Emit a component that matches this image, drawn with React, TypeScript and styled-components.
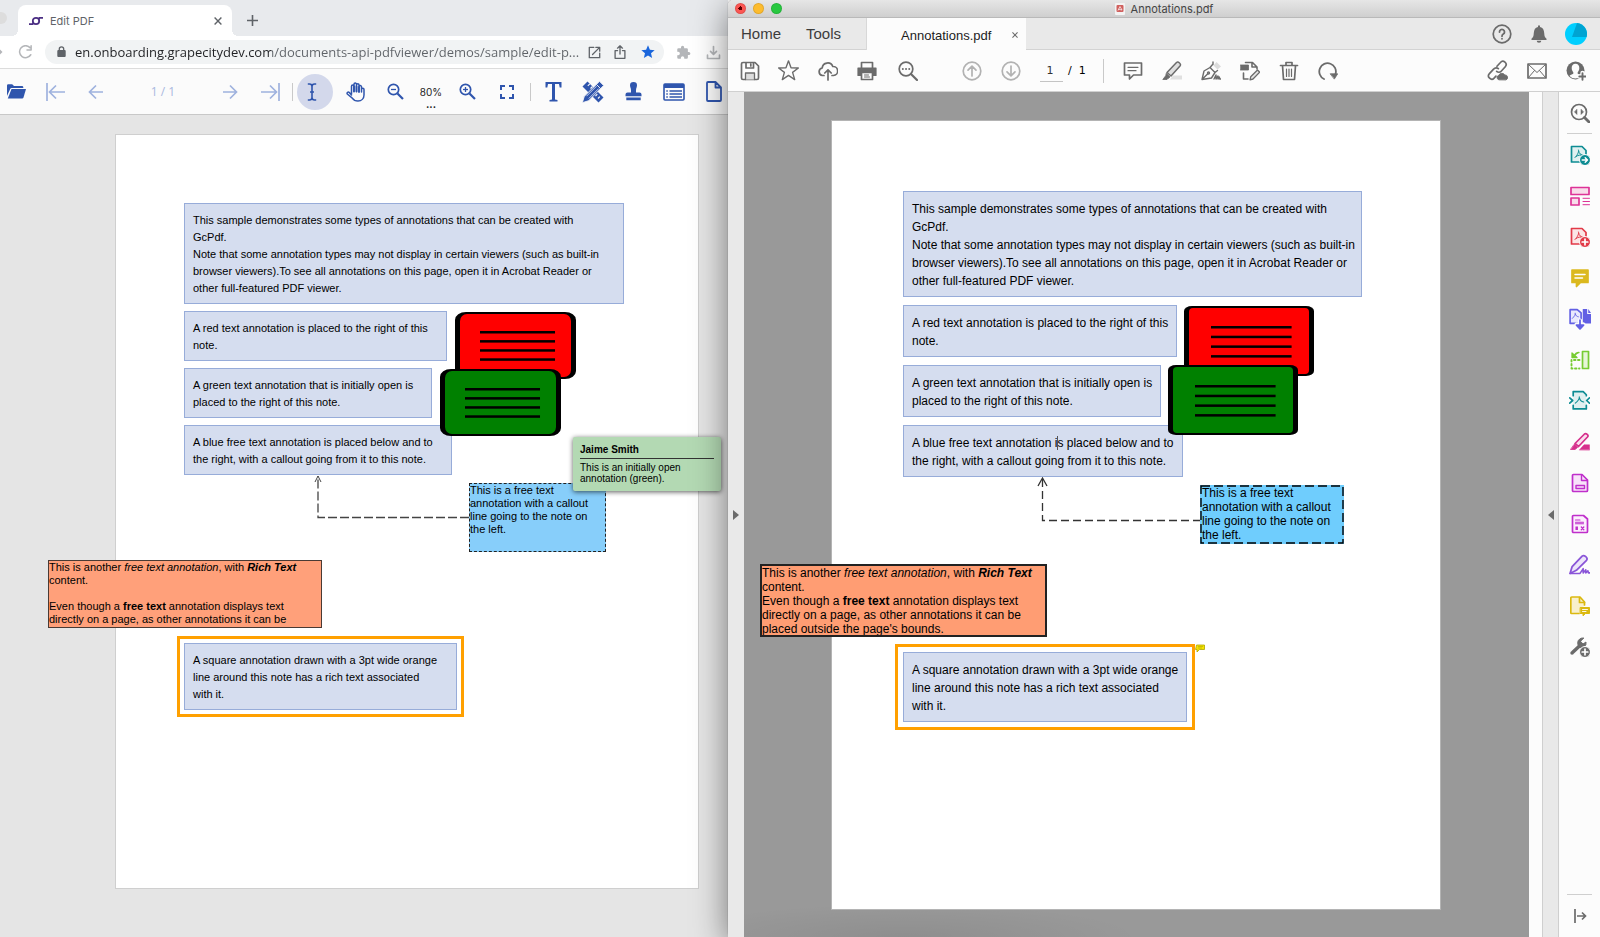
import React from "react";
import styled, { createGlobalStyle, css } from "styled-components";

const GlobalStyle = createGlobalStyle`
  *, *::before, *::after { box-sizing: border-box; }
  body { margin: 0; font-family: "Liberation Sans", Arial, sans-serif; color: #000; }
  button { font: inherit; }
  h2, p { margin: 0; }
  svg { display: block; flex: none; }
`;

const Desktop = styled.main`
  display: grid;
  grid-template-columns: 91fr 109fr;
  min-height: 100vh;
  overflow: hidden;
`;

/* ---------- shared parts ---------- */

const IconButton = styled.button<{ $w?: number; $color?: string }>`
  display: flex;
  align-items: center;
  justify-content: center;
  flex: none;
  width: ${(p) => p.$w ?? 39}px;
  height: 36px;
  padding: 0;
  border: 0;
  background: none;
  color: ${(p) => p.$color ?? "#6b6b6b"};
`;

const Spacer = styled.div<{ $w?: number }>`
  flex: ${(p) => (p.$w ? `none` : 1)};
  width: ${(p) => (p.$w ? `${p.$w}px` : "auto")};
`;

const Rule = styled.span<{ $h: number }>`
  flex: none;
  width: 1px;
  height: ${(p) => p.$h}px;
  background: #c9c9c9;
`;

/* ---------- browser window ---------- */

const BrowserWindow = styled.section`
  display: flex;
  flex-direction: column;
  min-width: 0;
  background: #e5e5e5;
`;

const TabStrip = styled.header`
  display: flex;
  align-items: flex-end;
  height: 36px;
  background: #e8eaed;

  > button {
    height: 31px;
  }
`;

const WindowDot = styled.span`
  align-self: center;
  width: 7px;
  height: 12px;
  margin-right: 11px;
  border-radius: 0 6px 6px 0;
  background: #dddddd;
`;

const BrowserTab = styled.div`
  position: relative;
  display: flex;
  align-items: center;
  width: 214px;
  height: 31px;
  padding: 0 6px 0 11px;
  border-radius: 8px 8px 0 0;
  background: #fff;
  font: 11px Inter, sans-serif;
  color: #5f6368;

  &::before,
  &::after {
    content: "";
    position: absolute;
    bottom: 0;
    width: 6px;
    height: 6px;
  }
  &::before {
    right: 100%;
    background: radial-gradient(circle at 0 0, transparent 6px, #fff 6px);
  }
  &::after {
    left: 100%;
    background: radial-gradient(circle at 100% 0, transparent 6px, #fff 6px);
  }
`;

const TabTitle = styled.span`
  flex: 1;
  margin-left: 7px;
`;

const AddressBar = styled.form`
  display: flex;
  align-items: center;
  height: 33px;
  background: #fff;
  border-bottom: 1px solid #dcdcdc;
`;

const UrlPill = styled.div`
  display: flex;
  align-items: center;
  flex: 1;
  min-width: 0;
  height: 24px;
  padding: 0 2px 0 12px;
  border-radius: 12px;
  background: #f1f3f4;
`;

const UrlInput = styled.input`
  flex: 1;
  min-width: 0;
  margin-left: 9px;
  padding: 0;
  border: 0;
  outline: 0;
  font: 13px/20px "Open Sans", sans-serif;
  color: #5f6368;
  background: linear-gradient(90deg, #202124 196px, #5f6368 196px);
  background-clip: text;
  -webkit-background-clip: text;
  -webkit-text-fill-color: transparent;
`;

const ViewerToolbar = styled.nav`
  display: flex;
  align-items: center;
  height: 46px;
  background: #fbfbfb;
  border-bottom: 1px solid #c8c8c8;
  color: #2f55ad;
`;

const SelectedTool = styled(IconButton)`
  padding-right: 6px;
  border-radius: 50%;
  background: #d3d8eb;
`;

const PageCount = styled.span`
  flex: none;
  width: 100px;
  text-align: center;
  font: 12px "Open Sans", sans-serif;
  color: #a9b9e0;
`;

const ZoomLevel = styled.button`
  flex: none;
  width: 34px;
  height: 36px;
  padding: 9px 0 0;
  border: 0;
  background: none;
  text-align: center;
  font: 10px/16px Inter, sans-serif;
  color: #222;

  span {
    display: block;
    font-weight: 700;
    line-height: 8px;
  }
`;

const BrowserCanvas = styled.div`
  flex: 1;
  padding: 19px 29px 48px 115px;
`;

/* ---------- pdf page ---------- */

const Page = styled.article<{ $w: number; $h: number; $pad: string; $size: number; $line: number; $edge: string }>`
  position: relative;
  width: ${(p) => p.$w}px;
  min-height: ${(p) => p.$h}px;
  padding: ${(p) => p.$pad};
  border: 1px solid ${(p) => p.$edge};
  background: #fff;
  font-size: ${(p) => p.$size}px;
  line-height: ${(p) => p.$line}px;
`;

const Notes = styled.div<{ $gap: number }>`
  display: flex;
  flex-direction: column;
  align-items: flex-start;
  gap: ${(p) => p.$gap}px;
`;

const Note = styled.p<{ $w: number }>`
  width: ${(p) => p.$w}px;
  padding: 8px 8px 6px;
  border: 1px solid #97acd9;
  background: #d5ddef;
  white-space: nowrap;
`;

const at = css<{ $x: number; $y: number }>`
  position: absolute;
  left: ${(p) => p.$x}px;
  top: ${(p) => p.$y}px;
`;

const Drawing = styled.svg<{ $x: number; $y: number }>`
  ${at}
`;

const FreeText = styled.div<{ $x: number; $y: number; $w: number; $h: number; $line: number; $fill: string; $border?: string }>`
  ${at}
  width: ${(p) => p.$w}px;
  height: ${(p) => p.$h}px;
  padding: ${(p) => (p.$border ? "0" : "1px 2px")};
  border: ${(p) => p.$border ?? "0"};
  overflow: hidden;
  background: ${(p) => p.$fill};
  line-height: ${(p) => p.$line}px;
  white-space: nowrap;
`;

const SquareMark = styled.div<{ $x: number; $y: number; $pad: number }>`
  ${at}
  padding: ${(p) => p.$pad}px;
  border: 3px solid #ffa000;
`;

const Popup = styled.aside<{ $x: number; $y: number }>`
  ${at}
  width: 148px;
  height: 54px;
  padding: 7px 7px 0;
  border-radius: 2px;
  background: #b3d9b3;
  box-shadow: 0 1px 5px rgba(0, 0, 0, 0.65);
  font-size: 10px;
  line-height: 11px;

  h2 {
    padding-bottom: 2px;
    margin-bottom: 3px;
    border-bottom: 1px solid #333;
    font-size: 10px;
    line-height: 12px;
  }
`;

const Caret = styled.span`
  position: absolute;
  width: 1px;
  height: 14px;
  margin-top: 2px;
  background: #555;
`;

/* ---------- acrobat window ---------- */

const AcrobatWindow = styled.section`
  position: relative;
  z-index: 1;
  display: flex;
  flex-direction: column;
  min-width: 0;
  border-radius: 5px 0 0 5px;
  background: #fcfcfc;
  box-shadow: 0 8px 34px rgba(0, 0, 0, 0.5), 0 0 1px rgba(0, 0, 0, 0.6);
`;

const TitleBar = styled.header`
  display: grid;
  grid-template-columns: 1fr auto 1fr;
  align-items: center;
  height: 18px;
  padding: 0 7px;
  border-bottom: 1px solid #b9b9b9;
  border-radius: 5px 0 0 0;
  background: linear-gradient(#e6e6e6, #cfcfcf);
`;

const Lights = styled.div`
  display: flex;
  gap: 7px;
`;

const Light = styled.button<{ $c: string; $dot?: boolean }>`
  width: 11px;
  height: 11px;
  padding: 0;
  border: 1px solid rgba(0, 0, 0, 0.1);
  border-radius: 50%;
  background: ${(p) => (p.$dot ? `radial-gradient(circle, #5a0000 2px, ${p.$c} 2px)` : p.$c)};
`;

const WindowTitle = styled.h1`
  display: flex;
  align-items: center;
  gap: 6px;
  margin: 0;
  font: 11px Inter, sans-serif;
  color: #444;
`;

const AcroTabs = styled.nav`
  display: flex;
  align-items: stretch;
  height: 32px;
  background: #e9e9e9;
  box-shadow: inset 0 -1px #d3d3d3;

  > button {
    height: 31px;
  }
`;

const MenuTab = styled.button`
  padding: 0 0 1px;
  margin-left: 13px;
  margin-right: 12px;
  border: 0;
  background: none;
  font-size: 15px;
  color: #3c3c3c;
`;

const DocTab = styled.div`
  display: flex;
  align-items: center;
  width: 160px;
  margin-left: 13px;
  padding: 2px 5px 0 34px;
  background: #fcfcfc;
  border-left: 1px solid #d8d8d8;
  font-size: 13px;
  color: #1c1c1c;

  span {
    flex: 1;
  }
`;

const AcroToolbar = styled.div`
  display: flex;
  align-items: center;
  height: 42px;
  padding: 0 5px 0 2px;
  border-bottom: 1px solid #d0d0d0;
`;

const PageInput = styled.input`
  width: 23px;
  height: 22px;
  margin: 1px 5px 0 10px;
  padding: 0 3px 0 0;
  border: 0;
  border-bottom: 1px solid #c4c4c4;
  background: none;
  text-align: center;
  font: 11px "DejaVu Sans", sans-serif;
  color: #333;
`;

const PageTotal = styled.span`
  width: 35px;
  font: 11px "DejaVu Sans", sans-serif;
  white-space: pre;
`;

const Workspace = styled.div`
  display: flex;
  flex: 1;
`;

const PaneHandle = styled.button<{ $edge?: boolean }>`
  display: flex;
  align-items: center;
  justify-content: center;
  flex: none;
  width: ${(p) => (p.$edge ? 17 : 16)}px;
  padding: 0;
  border: 0 solid #cfcfcf;
  border-width: ${(p) => (p.$edge ? "0 1px" : 0)};
  background: #e9e9e9;
  color: #6b6b6b;
`;

const AcroCanvas = styled.div`
  display: flex;
  justify-content: center;
  align-items: flex-start;
  flex: 1;
  padding: 28px 1px 27px 0;
  background: radial-gradient(ellipse at 40% 100%, rgba(0, 0, 0, 0.07), transparent 70%) 0 100% / 400px 34px no-repeat, #999;
`;

const ScrollTrack = styled.div`
  flex: none;
  width: 13px;
  background: #fcfcfc;
`;

const Rail = styled.aside`
  display: flex;
  flex-direction: column;
  align-items: center;
  flex: none;
  width: 41px;
  padding-bottom: 1px;

  hr {
    width: 25px;
    margin: 0;
    border: 0;
    border-top: 1px solid #cfcfcf;
  }
`;

const RailButton = styled(IconButton)`
  width: 41px;
  height: 41px;
`;

/* ---------- icons ---------- */

type IconProps = { s?: number; children: React.ReactNode; c?: string; w?: number };
const Line = ({ s = 20, c = "currentColor", w = 1.7, children }: IconProps) => (
  <svg width={s} height={s} viewBox="0 0 20 20" fill="none" stroke={c} strokeWidth={w} strokeLinecap="round" strokeLinejoin="round" aria-hidden="true">
    {children}
  </svg>
);

const Favicon = () => (
  <svg width="14" height="10" viewBox="0 0 14 10" fill="none" stroke="#4b2e83" strokeWidth="1.8" aria-hidden="true">
    <circle cx="7" cy="5" r="3.2" />
    <path d="M0 8.2h3.4L4.6 7M14 1.8h-3.4L9.4 3" />
  </svg>
);
const Close = ({ s }: { s: number }) => (
  <svg width={s} height={s} viewBox="0 0 8 8" stroke="currentColor" strokeWidth="1.4" aria-hidden="true">
    <path d="M.6.6 7.4 7.4M7.4.6.6 7.4" />
  </svg>
);
const Plus = () => (
  <svg width="11" height="11" viewBox="0 0 11 11" stroke="#5f6368" strokeWidth="1.6" aria-hidden="true">
    <path d="M5.5 0v11M0 5.5h11" />
  </svg>
);
const ForwardTip = () => (
  <svg width="5" height="8" viewBox="0 0 5 8" fill="#b4b6b9" aria-hidden="true">
    <path d="M0 1.500 2.500 4 0 6.500z" />
  </svg>
);
const Reload = () => (
  <Line s={15} w={2} c="#b4b6b9">
    <path d="M17 13a8 8 0 1 1-1-9.500M17.500 1v5.500H12" />
  </Line>
);
const Lock = () => (
  <svg width="9" height="12" viewBox="0 0 9 12" fill="none" aria-hidden="true">
    <rect x=".3" y="4" width="8.400" height="7" rx="1" fill="#5f6368" />
    <path d="M2.300 4.500V3a2.200 2.200 0 0 1 4.400 0v1.500" stroke="#5f6368" strokeWidth="1.300" />
  </svg>
);
const OpenExternal = () => (
  <Line s={13} c="#5f6368" w={2}>
    <path d="M9 2H2v16h16v-7M12 2h6v6M17.500 2.500 7 13" />
  </Line>
);
const Share = () => (
  <Line s={14} c="#5f6368" w={1.900}>
    <path d="M6.500 8H3v11h14V8h-3.500M10 13V1.500M6.500 4.500 10 1.200l3.500 3.300" />
  </Line>
);
const SolidStar = () => (
  <svg width="14" height="14" viewBox="0 0 20 20" fill="#1a66dc" aria-hidden="true">
    <path d="m10 .5 2.700 6.300 6.800.600-5.200 4.500 1.600 6.700L10 15l-5.900 3.600 1.600-6.700L.500 7.400l6.800-.600z" />
  </svg>
);
const Puzzle = () => (
  <svg width="15" height="15" viewBox="0 0 24 24" fill="#b4b6b9" aria-hidden="true">
    <path d="M20.500 11H19V7a2 2 0 0 0-2-2h-4V3.500a2.500 2.500 0 0 0-5 0V5H4a2 2 0 0 0-2 2v3.800h1.500a2.700 2.700 0 0 1 0 5.400H2V20a2 2 0 0 0 2 2h3.800v-1.500a2.700 2.700 0 0 1 5.400 0V22H17a2 2 0 0 0 2-2v-4h1.500a2.500 2.500 0 0 0 0-5z" />
  </svg>
);
const Download = () => (
  <Line s={15} c="#b4b6b9" w={2.200}>
    <path d="M10 2v10M6 8.500l4 4 4-4M2 13.500v4.500h16v-4.500" />
  </Line>
);

const Folder = () => (
  <svg width="19" height="15" viewBox="0 0 19 15" fill="#2f55ad" aria-hidden="true">
    <path d="M0 12V1.500Q0 .3 1.200.3h4L7 2h8q1.300 0 1.300 1.300V4H4.600Q3.600 4 3.200 5z" />
    <path d="M4.500 5H19l-2.500 8.600q-.300 1-1.300 1H.800z" />
  </svg>
);
const Arrow = ({ flip, bar }: { flip?: boolean; bar?: boolean }) => (
  <svg width="20" height="18" viewBox="0 0 20 18" fill="none" stroke="#9fb2de" strokeWidth="1.700" aria-hidden="true">
    <g transform={flip ? "translate(20 0) scale(-1 1)" : undefined}>
      {bar ? <path d="M1 0v18M19 9H4M10 2.500 3.500 9l6.500 6.500" /> : <path d="M17 9H4M10 2.500 3.500 9l6.500 6.500" />}
    </g>
  </svg>
);
const IBeam = () => (
  <svg width="10" height="18" viewBox="0 0 10 18" fill="none" stroke="#2f55ad" strokeWidth="1.600" aria-hidden="true">
    <path d="M.8 1h1.700Q5 1 5 3.500v11Q5 17 2.500 17H.800M9.200 1H7.500Q5 1 5 3.500v11Q5 17 7.500 17h1.700M3 9h4" />
  </svg>
);
const Hand = () => (
  <svg width="20" height="20" viewBox="0 0 20 20" fill="none" stroke="#2f55ad" strokeWidth="1.500" strokeLinecap="round" strokeLinejoin="round" aria-hidden="true">
    <path d="M5.500 12V4.300a1.250 1.250 0 0 1 2.500 0M8 9.500V2.300a1.250 1.250 0 0 1 2.500 0V9.500M10.500 3a1.250 1.250 0 0 1 2.500 0v6.500M13 4.800a1.250 1.250 0 0 1 2.500 0V10M15.500 7.500a1.250 1.250 0 0 1 2.500 0V13c0 3.500-2.500 6-6 6-3 0-4.500-1-6-3.200L1.300 12c-.800-1.300.9-2.600 2-1.500L5.500 13" />
    <path d="M8 4.500v5M10.500 4.500v5M13 5v5" strokeWidth="1.800" />
  </svg>
);
const Magnify = ({ plus }: { plus?: boolean }) => (
  <svg width="17" height="17" viewBox="0 0 17 17" fill="none" stroke="#2f55ad" strokeWidth="1.700" aria-hidden="true">
    <circle cx="6.500" cy="6.500" r="5.200" />
    <path d="M4 6.500h5" strokeWidth="1.300" />
    {plus && <path d="M6.500 4v5" strokeWidth="1.300" />}
    <path d="m10.500 10.500 5.500 5.500" strokeWidth="2.200" />
  </svg>
);
const Expand = () => (
  <svg width="14" height="14" viewBox="0 0 14 14" fill="none" stroke="#2f55ad" strokeWidth="2" aria-hidden="true">
    <path d="M1 5V1h4M9 1h4v4M13 9v4H9M5 13H1V9" />
  </svg>
);
const TypeTool = () => (
  <svg width="17" height="21" viewBox="0 0 17 21" fill="#2f55ad" aria-hidden="true">
    <path d="M.5 1h16v5.500h-1.800L14 3h-4v15.500l2.500.500V20.500h-8V19l2.500-.500V3H3l-.700 3.500H.500z" />
  </svg>
);
const RulerPencil = () => (
  <svg width="22" height="22" viewBox="0 0 22 22" fill="#2f55ad" aria-hidden="true">
    <path d="M5.500.5 21.500 16.500 16.500 21.500.500 5.500z" />
    <path d="m7.800 2.800-2 2M10.500 5.500l-2 2M16 17.500l1.800-1.800M13.500 15l1.800-1.800" stroke="#fbfbfb" strokeWidth="1.100" />
    <path d="M17.500.300 21.700 4.500 6.700 19.700.300 21.700 2.300 15.300z" stroke="#fbfbfb" strokeWidth=".900" />
    <path d="M4.500 15.200 14.500 5.200M6.800 17.500 16.800 7.500" stroke="#c9d3ec" strokeWidth="1" />
    <path d="m14.500 3.500 4 4" stroke="#fbfbfb" strokeWidth=".900" />
  </svg>
);
const Stamp = () => (
  <svg width="17" height="19" viewBox="0 0 17 19" fill="#2f55ad" aria-hidden="true">
    <path d="M5 3.200a3.500 3.200 0 0 1 7 0c0 2-1 2.800-1 5v2.300h3.500q2 0 2 2v1.800H.500v-1.800q0-2 2-2H6V8.200c0-2.200-1-3-1-5zM1.300 15.500h14.400v2.700H1.300z" />
  </svg>
);
const FormList = () => (
  <svg width="22" height="18" viewBox="0 0 22 18" fill="none" stroke="#2f55ad" aria-hidden="true">
    <rect x="1" y="1" width="20" height="16" rx="1" strokeWidth="1.600" />
    <path d="M1 3h20" strokeWidth="4" />
    <path d="M6.500 8H19M6.500 11H19M6.500 14H19" strokeWidth="1.500" />
    <path d="M3.300 8h1.500M3.300 11h1.500M3.300 14h1.500" strokeWidth="1.500" />
  </svg>
);
const BlankPage = () => (
  <svg width="16" height="21" viewBox="0 0 16 21" fill="none" stroke="#2f55ad" strokeWidth="1.800" strokeLinejoin="round" aria-hidden="true">
    <path d="M1 2q0-1 1-1h7.500L15 6.500V19q0 1-1 1H2q-1 0-1-1zM9.500 1v5.500H15" />
  </svg>
);

const Save = () => (
  <Line>
    <path d="M1.500 3q0-1.500 1.500-1.500h12L18.500 5v12q0 1.500-1.500 1.500H3q-1.500 0-1.500-1.500zM6 1.500V7h7.500V1.500M10.800 3v2" />
    <path d="M5.500 18.500V12h9v6.500" fill="#dcdcdc" strokeWidth="1.300" />
  </Line>
);
const StarLine = () => (
  <Line s={21} w={1.300}>
    <path d="m10 .8 2.400 6.600 7 .2-5.500 4.200 2 6.900-5.900-4.100-5.900 4.100 2-6.900L.6 7.600l7-.2z" />
  </Line>
);
const CloudUp = () => (
  <Line>
    <path d="M6 14.500H4.500a3.800 3.800 0 0 1-.3-7.500A5.500 5.500 0 0 1 14.800 5.500a4.500 4.500 0 0 1 .7 9H14M10 19V9M6.800 12 10 8.800l3.200 3.200" />
  </Line>
);
const Print = () => (
  <Line>
    <path d="M4.500 7V1.500h11V7" />
    <path d="M1 7h18v7.500h-3.500v-3h-11v3H1z" fill="currentColor" strokeWidth="1.200" />
    <path d="M4.500 11.500h11v7h-11z" fill="#fcfcfc" />
    <path d="M7.500 14h4M7.500 16h5" strokeWidth="1" />
  </Line>
);
const Find = () => (
  <Line>
    <circle cx="8" cy="8" r="6.800" />
    <path d="m13 13 6 6" strokeWidth="2.200" />
    <path d="M4.800 8h.1M8 8h.1M11.200 8h.1" strokeWidth="1.900" />
  </Line>
);
const RoundArrow = ({ down }: { down?: boolean }) => (
  <Line c="#b2b2b2">
    <circle cx="10" cy="10" r="8.800" />
    <path d={down ? "M10 5v9.500M6 10.800l4 4 4-4" : "M10 15V5.500M6 9.200l4-4 4 4"} />
  </Line>
);
const Comment = () => (
  <Line>
    <path d="M1.500 2h17v12h-8L6.500 18v-4h-5z" />
    <path d="M5 6.300h10M5 9.700h8" strokeWidth="1.200" />
  </Line>
);
const Highlighter = () => (
  <Line w={1.500}>
    <path d="M8 18.500h12v-4h-9z" fill="#e0e0e0" stroke="none" />
    <path d="M5 11.500 14.500 1.500q1.300-1 3 .500t.5 3L9 15z" fill="#dedede" />
    <path d="M4.500 12.500 8 16l-2 1.500-1 1H.800L3.500 15z" fill="currentColor" strokeWidth=".8" />
  </Line>
);
const InkPen = () => (
  <Line w={1.400}>
    <path d="m12.500 4.500 3-3.500 4.500 4.500L16.500 8.500z" fill="#dcdcdc" stroke="none" />
    <path d="M1 18.500 3 10l6-3.500 5 5L10.500 17zM1.500 18 6.800 12.700M9 6.500l3-3.500M12 1v2.500M14 11.500l2.500-2" />
    <circle cx="7.500" cy="12" r="1" />
    <path d="m13 18 2-4v4l2-3v3l1.300-2 .5 2H20" />
  </Line>
);
const EditDoc = () => (
  <Line w={1.600}>
    <path d="M5.500 1.500h7L17 6v2M12 1.500V6h4.500M3.500 12v6H8" />
    <path d="M.500 4h8v5h-8z" fill="currentColor" strokeWidth=".8" />
    <path d="m10 18.800.7-3L17.500 9l2.200 2.200L13 18z" fill="#e4e4e4" strokeWidth="1.300" />
  </Line>
);
const Trash = () => (
  <Line>
    <path d="M1.500 4.500h17M3.500 4.500l1 14h11l1-14M7 4.500V1.500h6v3" />
    <path d="M7.500 8v7.500M10 8v7.500M12.500 8v7.500" strokeWidth="1.200" />
  </Line>
);
const Rotate = () => (
  <Line w={1.800}>
    <path d="M6 18A8.300 8.300 0 1 1 17.500 13" />
    <path d="M12.500 12.800h7.200l-3.200 5z" fill="currentColor" strokeWidth=".8" />
  </Line>
);
const LinkCloud = () => (
  <Line s={21} w={1.600}>
    <path d="m9.500 6 3.300-3.600a3 3 0 0 1 4.600 4L13.500 10.700a3 3 0 0 1-4.300.1" />
    <path d="M10.800 8.300a3 3 0 0 0-4.300.2L2.300 13a3 3 0 0 0 4.500 4.200L8.500 15.300" />
    <path d="M11 18.800a2.200 2.200 0 0 1 .2-4.200 3.300 3.300 0 0 1 5.800-.4 2.500 2.500 0 0 1 1.500 4.600z" fill="currentColor" strokeWidth=".8" />
  </Line>
);
const Mail = () => (
  <Line w={1.700}>
    <path d="M1 3h18v14H1z" />
    <path d="m1.500 3.500 8.500 8 8.500-8M1.500 16.500 7.500 9.500M18.500 16.500l-6-7" strokeWidth="1" />
  </Line>
);
const AddUser = () => (
  <Line>
    <circle cx="9.500" cy="9.500" r="9" fill="currentColor" stroke="none" />
    <path d="M9.500 2.800c2.500 0 3.800 1.700 3.800 4.200 0 2-.9 3.400-1.600 4.300v1.400c1.300.8 3.300 1.200 3.800 2.400Q13 17.500 9.500 17.500T3.500 15c.5-1.100 2.500-1.500 3.800-2.300v-1.400C6.600 10.400 5.700 9 5.700 7c0-2.500 1.300-4.200 3.800-4.200z" fill="#fcfcfc" stroke="none" />
    <path d="M16.500 12v7M13 15.500h7" stroke="#fcfcfc" strokeWidth="4.400" />
    <path d="M16.500 12.300v6.400M13.300 15.500h6.400" strokeWidth="1.900" />
  </Line>
);
const Help = () => (
  <Line>
    <circle cx="10" cy="10" r="8.800" />
    <path d="M7.500 8a2.500 2.500 0 1 1 3.800 2.100Q10 10.900 10 12.200M10 14.700v.1" strokeWidth="1.800" />
  </Line>
);
const Bell = () => (
  <svg width="16" height="18" viewBox="0 0 16 18" fill="#6b6b6b" aria-hidden="true">
    <path d="M7 .5h2v1.600c3 .6 4 3 4.200 6 .2 3.500.8 4.400 2.300 5.600V15H.5v-1.300c1.500-1.200 2.100-2.100 2.300-5.600.2-3 1.200-5.400 4.200-6zM5.700 15.800h4.600a2.300 2 0 0 1-4.600 0z" />
  </svg>
);
const Avatar = () => (
  <svg width="22" height="22" viewBox="0 0 22 22" aria-hidden="true">
    <circle cx="11" cy="11" r="11" fill="#00cfff" />
    <path d="M7 14 12 .1A11 11 0 0 1 21.600 14z" fill="#00a4d2" />
  </svg>
);
const PdfMini = () => (
  <svg width="10" height="12" viewBox="0 0 10 12" aria-hidden="true">
    <rect width="10" height="12" rx="1" fill="#f3f3f3" />
    <rect x="1.500" y="2" width="7" height="7" rx="1" fill="#d0605e" />
    <path d="M3 7.500 5 3.500l2 3.500-3.500-.8" fill="none" stroke="#fff" strokeWidth=".7" />
  </svg>
);
const Triangle = ({ left }: { left?: boolean }) => (
  <svg width="6" height="10" viewBox="0 0 6 10" fill="currentColor" aria-hidden="true">
    <path d={left ? "M6 0v10L0 5z" : "M0 0v10l6-5z"} />
  </svg>
);

const acro = "M5 12.500C8 9.500 9 6.500 8.500 5M8.700 6c.300 2.500 2 4 5 4.500M6 11.500c2-1.500 4.500-1.800 7-1.200";

const railIcons: { label: string; icon: React.ReactNode }[] = [
  {
    label: "Export PDF",
    icon: (
      <Line c="#0d8c93">
        <path d="M1.500 1.500h10.500l4 4V17H1.500z" fill="#e0f0f0" />
        <path d={acro} strokeWidth="1" />
        <circle cx="15" cy="15" r="5.500" fill="#0d8c93" stroke="#fcfcfc" strokeWidth="1" />
        <path d="M12.200 15h5M15.200 12.700l2.300 2.300-2.300 2.300" stroke="#fff" strokeWidth="1.400" />
      </Line>
    ),
  },
  {
    label: "Organize Pages",
    icon: (
      <Line c="#dd3397">
        <path d="M1 1.500h18v7H1z" fill="#f8dcea" />
        <path d="M1 12h8v7H1z" fill="#f8dcea" />
        <path d="M13 12.300h6.500M13 15.500h6.500M13 18.700h6.500" strokeWidth="1" />
      </Line>
    ),
  },
  {
    label: "Create PDF",
    icon: (
      <Line c="#e23a48">
        <path d="M1.500 1.500h10.500l4 4V17H1.500z" fill="#fbe6e6" />
        <path d={acro} strokeWidth="1" />
        <circle cx="15" cy="15" r="5.500" fill="#e23a48" stroke="#fcfcfc" strokeWidth="1" />
        <path d="M12.200 15h5.600M15 12.200v5.600" stroke="#fff" strokeWidth="1.700" />
      </Line>
    ),
  },
  {
    label: "Comment",
    icon: (
      <Line c="#dbb91f">
        <path d="M2 2h16v12.500h-7.500l-4 4v-4H2z" fill="#dbb91f" />
        <path d="M5 6.500h10M5 10h7.500" stroke="#fff" strokeWidth="1.500" />
      </Line>
    ),
  },
  {
    label: "Combine Files",
    icon: (
      <Line s={22} c="#6260e4" w={1.500}>
        <path d="M1 1.500h6.500L11 4.500V14H1z" fill="#e9e9fd" />
        <path d="M3 9.500C5 7.500 6 6 5.700 4.700M5.800 5.500c.3 1.500 1.200 2.200 2.700 2.500" strokeWidth=".8" />
        <path d="M12.500 1h4v4.500H20V14h-7.500z" fill="#6260e4" strokeWidth="0" />
        <path d="m17.500 1 2.500 3.500h-2.500z" fill="#6260e4" strokeWidth="0" />
        <path d="M10 11.500v6M7 15l3 3 3-3" stroke="#fcfcfc" strokeWidth="4" />
        <path d="M10 11V18M6.800 15.500 10 19l3.200-3.500z" fill="#6260e4" strokeWidth="1.600" />
      </Line>
    ),
  },
  {
    label: "Compare Files",
    icon: (
      <Line c="#77cc33">
        <path d="M12.500 1.500h6v17h-6z" fill="#e6f6d8" />
        <path d="M9.500 10H1.500v8.500h8" strokeDasharray="1.500 2.500" strokeWidth="1.900" />
        <path d="M9 2.500q-3.500 0-5 4M2 3v4.500h5z" fill="#77cc33" strokeWidth="1.300" />
      </Line>
    ),
  },
  {
    label: "Compress PDF",
    icon: (
      <Line s={21} c="#0d8c93" w={1.600}>
        <path d="M4 2h9l3.500 3v13H4z" fill="#e0f0f0" stroke="none" />
        <path d="M4 5.500V1.500h9.500l3 3v1M4 14.500V18h12.500v-3.500M.7 7.500 3.500 10 .7 12.500M19.500 7.500 16.800 10l2.700 2.500" />
        <path d="M6 12.500C8.500 10.500 10 8 9.800 6.500M10 7.500c.3 2 2 3.500 4 4" strokeWidth="1" />
      </Line>
    ),
  },
  {
    label: "Redact",
    icon: (
      <Line c="#d6308c">
        <path d="M5 11.500 14.500 2q1.200-1 2.700.300t.3 2.700L8.500 14.500z" fill="#fadfee" />
        <path d="M4.500 12.500 7.500 15.500l-2.500 2H.800z" fill="#d6308c" strokeWidth=".8" />
        <path d="m9.500 17.800 4.500-5h5.500v5z" fill="#d6308c" strokeWidth=".5" />
      </Line>
    ),
  },
  {
    label: "Prepare Form",
    icon: (
      <Line c="#bf2fcb">
        <path d="M2.500 2.500q0-1 1-1h8.500l5.500 5.500v10.500q0 1-1 1h-13q-1 0-1-1z" fill="#f8e2fa" />
        <path d="M11.500 2v5.500H17M6 12.500h8.500v3H6z" strokeWidth="1.400" />
      </Line>
    ),
  },
  {
    label: "Rich Media",
    icon: (
      <Line c="#bf2fcb">
        <path d="M2.500 2.500q0-1 1-1h10l4 3.500v12.500q0 1-1 1h-13q-1 0-1-1z" fill="#fceffd" />
        <path d="M5.500 6h4.500M5.500 8.300h8M5.500 9.800h8" strokeWidth="1.100" />
        <path d="M6.700 12.500v3.500" strokeWidth="2.500" strokeLinecap="butt" />
        <path d="m11.300 13 2.500 2.700M13.800 13l-2.500 2.700" strokeWidth="1.300" />
      </Line>
    ),
  },
  {
    label: "Fill and Sign",
    icon: (
      <Line s={21} c="#8a55d8">
        <path d="M1 18.500 3 12 12.500 2q1.500-1.200 3.500.500t.700 3.500L7 15.500z" fill="#ece4fa" />
        <path d="M1 18.500h9.500l3-4.500v4l2.500-3v3l2-2 .500 2H20" strokeWidth="1.500" />
      </Line>
    ),
  },
  {
    label: "Send for Comments",
    icon: (
      <Line c="#dbb910">
        <path d="M9 17.500H1.500q-.700 0-.700-.700V2q0-1 1-1H10l4.500 5v3" fill="#f8f0cc" />
        <path d="M9.500 1.500v5h5" />
        <path d="M10.500 11.500h9v6h-4l-2.500 2.300v-2.300h-2.500z" fill="#dbb910" strokeWidth="1" />
        <path d="M12.500 13.500h5M12.500 15.500h3.500" stroke="#fff" strokeWidth=".9" />
      </Line>
    ),
  },
  {
    label: "More Tools",
    icon: (
      <Line>
        <path d="M2.500 15.500 10 8.500M2 16h.1" strokeWidth="3.500" />
        <path d="M13.500 1A5 5 0 0 0 7.700 5.500Q7.500 8.500 9.500 10T14.500 9.500Q16.500 8 16 5l-3 2-2.300-2.500z" fill="currentColor" strokeWidth="1" />
        <circle cx="15" cy="15" r="5.500" fill="#6b6b6b" stroke="#fcfcfc" strokeWidth="1" />
        <path d="M12.200 15h5.600M15 12.200v5.600" stroke="#fff" strokeWidth="1.700" />
      </Line>
    ),
  },
];

/* ---------- document drawings ---------- */

const NoteGlyph = ({ x, y, w, h, fill, r }: { x: number; y: number; w: number; h: number; fill: string; r: number }) => (
  <Drawing $x={x} $y={y} width={w} height={h} aria-hidden="true">
    <rect width={w} height={h} rx={r + 3} ry={r} />
    <rect x="5" y="2" width={w - 10} height={h - 4} rx={r - 1} fill={fill} />
    {[0, 1, 2, 3].map((i) => (
      <rect key={i} x={Math.round(w * 0.207)} y={Math.round(h * 0.28) + i * (w > 125 ? 9.700 : 9.100)} width={w * 0.62} height="2.500" />
    ))}
  </Drawing>
);

const intro = (
  <>
    This sample demonstrates some types of annotations that can be created with
    <br />
    GcPdf.
    <br />
    Note that some annotation types may not display in certain viewers (such as built-in
    <br />
    browser viewers).To see all annotations on this page, open it in Acrobat Reader or
    <br />
    other full-featured PDF viewer.
  </>
);
const redNote = (
  <>
    A red text annotation is placed to the right of this
    <br />
    note.
  </>
);
const greenNote = (
  <>
    A green text annotation that is initially open is
    <br />
    placed to the right of this note.
  </>
);
const squareNote = (
  <>
    A square annotation drawn with a 3pt wide orange
    <br />
    line around this note has a rich text associated
    <br />
    with it.
  </>
);
const calloutText = (
  <>
    This is a free text
    <br />
    annotation with a callout
    <br />
    line going to the note on
    <br />
    the left.
  </>
);
const RichText = ({ spaced }: { spaced?: boolean }) => (
  <>
    This is another <em>free text annotation</em>, with{" "}
    <strong>
      <em>Rich Text</em>
    </strong>
    <br />
    content.
    <br />
    {spaced && <br />}
    Even though a <strong>free text</strong> annotation displays text
    <br />
    directly on a page, as other annotations it can be
    {!spaced && (
      <>
        <br />
        placed outside the page's bounds.
      </>
    )}
  </>
);

const Browser = () => (
  <BrowserWindow aria-label="Browser">
    <TabStrip>
      <WindowDot />
      <BrowserTab>
        <Favicon />
        <TabTitle>Edit PDF</TabTitle>
        <IconButton $w={16} $color="#5f6368" aria-label="Close tab">
          <Close s={8} />
        </IconButton>
      </BrowserTab>
      <IconButton $w={40} aria-label="New tab">
        <Plus />
      </IconButton>
    </TabStrip>
    <AddressBar onSubmit={(e) => e.preventDefault()}>
      <IconButton type="button" $w={5} aria-label="Forward">
        <ForwardTip />
      </IconButton>
      <IconButton type="button" $w={40} aria-label="Reload">
        <Reload />
      </IconButton>
      <UrlPill>
        <Lock />
        <UrlInput aria-label="Address" defaultValue="en.onboarding.grapecitydev.com/documents-api-pdfviewer/demos/sample/edit-p..." />
        <IconButton type="button" $w={22} aria-label="Open in new window">
          <OpenExternal />
        </IconButton>
        <IconButton type="button" $w={29} aria-label="Share">
          <Share />
        </IconButton>
        <IconButton type="button" $w={28} aria-label="Bookmark">
          <SolidStar />
        </IconButton>
      </UrlPill>
      <Spacer $w={4} />
      <IconButton type="button" $w={31} aria-label="Extensions">
        <Puzzle />
      </IconButton>
      <IconButton type="button" $w={29} aria-label="Downloads">
        <Download />
      </IconButton>
    </AddressBar>
    <ViewerToolbar aria-label="Viewer tools">
      <IconButton $w={32} aria-label="Open document"><Folder /></IconButton>
      <IconButton $w={47} aria-label="First page"><Arrow bar /></IconButton>
      <IconButton $w={34} aria-label="Previous page"><Arrow /></IconButton>
      <PageCount>1 / 1</PageCount>
      <IconButton $w={34} aria-label="Next page"><Arrow flip /></IconButton>
      <IconButton $w={45} aria-label="Last page"><Arrow flip bar /></IconButton>
      <Rule $h={18} />
      <Spacer $w={4} />
      <SelectedTool $w={36} aria-label="Text selection"><IBeam /></SelectedTool>
      <Spacer $w={3} />
      <IconButton $w={40} aria-label="Pan"><Hand /></IconButton>
      <IconButton $w={38} aria-label="Zoom out"><Magnify /></IconButton>
      <ZoomLevel>
        80%<span>...</span>
      </ZoomLevel>
      <IconButton $w={38} aria-label="Zoom in"><Magnify plus /></IconButton>
      <IconButton $w={42} aria-label="Full screen"><Expand /></IconButton>
      <Spacer $w={2} />
      <Rule $h={18} />
      <Spacer $w={2} />
      <IconButton $w={40} aria-label="Text tools"><TypeTool /></IconButton>
      <IconButton $w={40} aria-label="Drawing tools"><RulerPencil /></IconButton>
      <IconButton $w={40} aria-label="Stamp"><Stamp /></IconButton>
      <IconButton $w={41} aria-label="Form tools"><FormList /></IconButton>
      <IconButton $w={40} aria-label="Page tools"><BlankPage /></IconButton>
    </ViewerToolbar>
    <BrowserCanvas>
      <Page $w={584} $h={755} $pad="68px" $size={11} $line={17} $edge="#cfcfcf">
        <Notes $gap={7}>
          <Note $w={440}>{intro}</Note>
          <Note $w={263}>{redNote}</Note>
          <Note $w={248}>{greenNote}</Note>
          <Note $w={268}>
            A blue free text annotation is placed below and to
            <br />
            the right, with a callout going from it to this note.
          </Note>
        </Notes>
        <NoteGlyph x={339} y={177} w={121} h={67} fill="#f00" r={8} />
        <NoteGlyph x={324} y={234} w={121} h={67} fill="#008000" r={8} />
        <Drawing $x={196} $y={340} width="158" height="46" fill="none" stroke="#444" strokeWidth="1.300" aria-hidden="true">
          <path d="M157 42.500H6V1" strokeDasharray="9 3" />
          <path d="M3 7 6 1l3 6" strokeWidth="1" />
        </Drawing>
        <FreeText $x={353} $y={348} $w={137} $h={69} $line={13} $fill="#87cefa" $border="1px dashed #222">
          {calloutText}
        </FreeText>
        <FreeText $x={-68} $y={425} $w={274} $h={68} $line={13} $fill="#ffa07a" $border="1px solid #4a3a34">
          <RichText spaced />
        </FreeText>
        <SquareMark $x={61} $y={501} $pad={4}>
          <Note $w={273}>{squareNote}</Note>
        </SquareMark>
        <Popup $x={457} $y={302}>
          <h2>Jaime Smith</h2>
          <p>
            This is an initially open
            <br />
            annotation (green).
          </p>
        </Popup>
      </Page>
    </BrowserCanvas>
  </BrowserWindow>
);

const Acrobat = () => (
  <AcrobatWindow aria-label="Acrobat">
    <TitleBar>
      <Lights>
        <Light $c="#fc5753" $dot aria-label="Close window" />
        <Light $c="#fdbc2e" aria-label="Minimize window" />
        <Light $c="#28c840" aria-label="Zoom window" />
      </Lights>
      <WindowTitle>
        <PdfMini />
        Annotations.pdf
      </WindowTitle>
    </TitleBar>
    <AcroTabs>
      <MenuTab>Home</MenuTab>
      <MenuTab>Tools</MenuTab>
      <DocTab>
        <span>Annotations.pdf</span>
        <IconButton $w={12} aria-label="Close document">
          <Close s={6} />
        </IconButton>
      </DocTab>
      <Spacer />
      <IconButton $w={36} aria-label="Help"><Help /></IconButton>
      <IconButton $w={37} aria-label="Notifications"><Bell /></IconButton>
      <IconButton $w={38} aria-label="Account"><Avatar /></IconButton>
      <Spacer $w={5} />
    </AcroTabs>
    <AcroToolbar>
      <IconButton aria-label="Save"><Save /></IconButton>
      <IconButton aria-label="Star"><StarLine /></IconButton>
      <IconButton aria-label="Upload"><CloudUp /></IconButton>
      <IconButton aria-label="Print"><Print /></IconButton>
      <Spacer $w={2} />
      <IconButton aria-label="Find"><Find /></IconButton>
      <Spacer $w={25} />
      <IconButton aria-label="Previous page"><RoundArrow /></IconButton>
      <IconButton aria-label="Next page"><RoundArrow down /></IconButton>
      <PageInput aria-label="Page number" defaultValue="1" />
      <PageTotal>/  1</PageTotal>
      <Rule $h={24} />
      <Spacer $w={9} />
      <IconButton aria-label="Add comment"><Comment /></IconButton>
      <IconButton aria-label="Highlight"><Highlighter /></IconButton>
      <IconButton aria-label="Sign"><InkPen /></IconButton>
      <IconButton aria-label="Edit"><EditDoc /></IconButton>
      <IconButton aria-label="Delete"><Trash /></IconButton>
      <IconButton aria-label="Rotate"><Rotate /></IconButton>
      <Spacer />
      <IconButton aria-label="Share link"><LinkCloud /></IconButton>
      <IconButton aria-label="Send by email"><Mail /></IconButton>
      <IconButton aria-label="Add people"><AddUser /></IconButton>
    </AcroToolbar>
    <Workspace>
      <PaneHandle aria-label="Open navigation pane">
        <Triangle />
      </PaneHandle>
      <AcroCanvas>
        <Page $w={610} $h={790} $pad="70px 71px" $size={12} $line={18} $edge="#b4b4b4">
          <Notes $gap={8}>
            <Note $w={459}>{intro}</Note>
            <Note $w={274}>{redNote}</Note>
            <Note $w={258}>{greenNote}</Note>
            <Note $w={280}>
              A blue free text annotation i<Caret />s placed below and to
              <br />
              the right, with a callout going from it to this note.
            </Note>
          </Notes>
          <NoteGlyph x={352} y={185} w={130} h={70} fill="#f00" r={5} />
          <NoteGlyph x={336} y={244} w={130} h={70} fill="#008000" r={5} />
          <Drawing $x={204} $y={356} width="166" height="48" fill="none" stroke="#333" strokeWidth="1.300" aria-hidden="true">
            <path d="M165 43.500H6.500V2" strokeDasharray="8 4" />
            <path d="m2 9 4.500-8 4.500 8" />
          </Drawing>
          <FreeText $x={368} $y={364} $w={144} $h={59} $line={14} $fill="#6fcdfd">
            {calloutText}
            <Drawing $x={0} $y={0} width="144" height="59" fill="none" stroke="#000" strokeWidth="1.400" aria-hidden="true">
              <rect x="1" y="1" width="142" height="57" strokeDasharray="9 4" />
            </Drawing>
          </FreeText>
          <FreeText $x={-72} $y={443} $w={287} $h={73} $line={14} $fill="#ff9d73" $border="2px solid #222">
            <RichText />
          </FreeText>
          <SquareMark $x={63} $y={523} $pad={5}>
            <Note $w={284}>{squareNote}</Note>
          </SquareMark>
          <Drawing $x={363} $y={523} width="10" height="9" fill="#f5e400" stroke="#b0a400" strokeWidth=".8" aria-hidden="true">
            <path d="M1.500 1h8v4.500H4.500L2 8V5.500H.500z" />
            <path d="M3 2.500h5M3 4h4" strokeWidth=".6" />
          </Drawing>
        </Page>
      </AcroCanvas>
      <ScrollTrack />
      <PaneHandle $edge aria-label="Collapse tools pane">
        <Triangle left />
      </PaneHandle>
      <Rail aria-label="Tools">
        <RailButton aria-label="Search tools">
          <Line>
            <circle cx="9" cy="9" r="7.500" />
            <path d="m14.500 14.500 4.500 4.500" strokeWidth="2.800" />
            <path d="M7 6.500v5L4.500 9zM11 6.500v5L13.500 9z" fill="currentColor" strokeWidth=".5" />
          </Line>
        </RailButton>
        <hr />
        {railIcons.map((r) => (
          <RailButton key={r.label} aria-label={r.label}>
            {r.icon}
          </RailButton>
        ))}
        <Spacer />
        <hr />
        <RailButton aria-label="Hide tools pane">
          <svg width="14" height="14" viewBox="0 0 14 14" fill="none" stroke="#6b6b6b" strokeWidth="1.700" aria-hidden="true">
            <path d="M2 0v14M4 7h8M9 3.500 12.500 7 9 10.500" />
          </svg>
        </RailButton>
      </Rail>
    </Workspace>
  </AcrobatWindow>
);

export default function App() {
  return (
    <>
      <GlobalStyle />
      <Desktop>
        <Browser />
        <Acrobat />
      </Desktop>
    </>
  );
}
